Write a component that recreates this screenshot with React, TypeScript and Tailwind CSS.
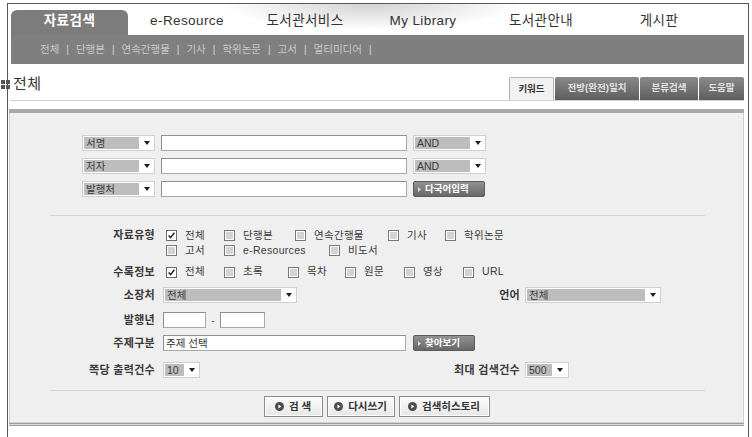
import React from "react";

const navTabs = ["자료검색", "e-Resource", "도서관서비스", "My Library", "도서관안내", "게시판"];
const subMenu = ["전체", "단행본", "연속간행물", "기사", "학위논문", "고서", "멀티미디어"];

function Arrow() {
  return (
    <svg width="6" height="4" viewBox="0 0 6 4" className="shrink-0">
      <path d="M0 0h6L3 4z" fill="#1f1f1f" />
    </svg>
  );
}

function Select({ value, w, hl }: { value: string; w: string; hl: string }) {
  return (
    <div className={`${w} h-[16px] shrink-0 bg-white border border-[#cfcfcf] flex items-center pl-px`}>
      <span className={`${hl} h-[12px] bg-[#bdbdbd] text-[10.5px] leading-[12px] text-[#3a3a3a] pl-[2px] whitespace-nowrap overflow-hidden`}>
        {value}
      </span>
      <span className="flex-1 flex justify-center">
        <Arrow />
      </span>
    </div>
  );
}

function TextBox({ w, value }: { w: string; value?: string }) {
  return (
    <div className={`${w} h-[16px] shrink-0 bg-white border border-[#a9a9a9] border-t-[#8f8f8f] border-l-[#8f8f8f] text-[10.5px] leading-[14px] text-[#333] pl-[2px]`}>
      {value}
    </div>
  );
}

function DarkButton({ w, label }: { w: string; label: string }) {
  return (
    <div className={`${w} h-[16px] shrink-0 rounded-[2px] border border-[#5c5c5c] bg-gradient-to-b from-[#929292] to-[#686868] flex items-center pl-[4px] text-white text-[9.5px] font-bold leading-none`}>
      <svg width="3" height="5" viewBox="0 0 3 5" className="mr-[4px]">
        <path d="M0 0l3 2.5L0 5z" fill="#dcdcdc" />
      </svg>
      {label}
    </div>
  );
}

function Box({ checked }: { checked?: boolean }) {
  if (checked) {
    return (
      <span className="w-[11px] h-[11px] shrink-0 border border-[#6c6c6c] bg-white flex items-center justify-center">
        <svg width="7" height="7" viewBox="0 0 7 7">
          <path d="M0.6 3.4 L2.6 5.6 L6.4 0.8" stroke="#222" strokeWidth="1.5" fill="none" />
        </svg>
      </span>
    );
  }
  return (
    <span className="w-[11px] h-[11px] shrink-0 border border-[#787878] bg-white p-px">
      <span className="block w-full h-full bg-[#d3d3d3]" />
    </span>
  );
}

type Item = { label: string; w?: string; checked?: boolean };

function Check({ label, w, checked }: Item) {
  return (
    <span className={`${w ?? ""} shrink-0 flex items-center`}>
      <Box checked={checked} />
      <span className="ml-[8px] text-[10.5px] tracking-[0.3px] text-[#3a3a3a] whitespace-nowrap">{label}</span>
    </span>
  );
}

function Label({ children, w = "w-[145px]" }: { children: React.ReactNode; w?: string }) {
  return (
    <div className={`${w} shrink-0 text-right font-bold text-[11px] tracking-[0.3px] text-[#3a3a3a] whitespace-nowrap`}>
      {children}
    </div>
  );
}

function Play() {
  return (
    <svg width="9" height="9" viewBox="0 0 9 9" className="shrink-0">
      <circle cx="4.5" cy="4.5" r="4.5" fill="#4d4d4d" />
      <path d="M3.4 2.5 L6.4 4.5 L3.4 6.5z" fill="#fff" />
    </svg>
  );
}

function LightButton({ w, label }: { w: string; label: string }) {
  return (
    <div className={`${w} h-[21px] shrink-0 border border-[#8c8c8c] bg-white p-px`}>
      <div className="h-full bg-gradient-to-b from-[#fbfbfb] to-[#e8e8e8] flex items-center justify-center gap-[5px] text-[10.5px] font-bold text-[#333] whitespace-nowrap">
        <Play />
        {label}
      </div>
    </div>
  );
}

const typeRow1: Item[] = [
  { label: "전체", w: "w-[58px]", checked: true },
  { label: "단행본", w: "w-[71px]" },
  { label: "연속간행물", w: "w-[93px]" },
  { label: "기사", w: "w-[57px]" },
  { label: "학위논문" },
];
const typeRow2: Item[] = [
  { label: "고서", w: "w-[58px]" },
  { label: "e-Resources", w: "w-[105px]" },
  { label: "비도서" },
];
const infoRow: Item[] = [
  { label: "전체", w: "w-[58px]", checked: true },
  { label: "초록", w: "w-[64px]" },
  { label: "목차", w: "w-[57px]" },
  { label: "원문", w: "w-[59px]" },
  { label: "영상", w: "w-[59px]" },
  { label: "URL" },
];

export default function App() {
  return (
    <div className='w-[752px] h-[437px] overflow-hidden bg-white text-[#333] font-[family-name:"Liberation_Sans","Noto_Sans_CJK_KR",sans-serif]'>
      <div className="ml-[7px] mt-[3px] w-[742px] h-[434px] border-x border-t border-[#555] flex flex-col">
        {/* top navigation */}
        <div className="h-[31px] flex items-end pl-[3px] bg-[radial-gradient(ellipse_150px_26px_at_49%_0%,#d2d2d2,#ffffff)]">
          {navTabs.map((t, i) =>
            i === 0 ? (
              <div
                key={t}
                className="w-[117px] h-[25px] rounded-t-[6px] bg-[#7c7c7c] flex items-center justify-center pb-[3px] text-white font-bold text-[13.5px] tracking-[0.5px]"
              >
                {t}
              </div>
            ) : (
              <div
                key={t}
                className="w-[118px] h-[25px] flex items-center justify-center pb-[3px] text-[#333] text-[13.5px] tracking-[0.4px]"
              >
                {t}
              </div>
            )
          )}
        </div>

        {/* sub menu */}
        <div className="ml-[3px] w-[733px] h-[29px] bg-[#7f7f7f] flex items-center pl-[29px] text-[10.5px] text-[#cacaca]">
          {subMenu.map((s) => (
            <span key={s} className="flex items-center">
              {s}
              <span className="mx-[7px] text-[#d6d6d6] text-[10px]">|</span>
            </span>
          ))}
        </div>

        {/* page title and search mode tabs */}
        <div className="h-[36px] flex justify-between">
          <div className="flex items-center pt-[5px] -ml-[7px]">
            <div className="grid grid-cols-2 gap-px w-[9px]">
              <span className="w-[4px] h-[4px] bg-[#555]" />
              <span className="w-[4px] h-[4px] bg-[#555]" />
              <span className="w-[4px] h-[4px] bg-[#555]" />
              <span className="w-[4px] h-[4px] bg-[#555]" />
            </div>
            <span className="ml-[3px] text-[15px] text-[#333] tracking-[0.5px]">전체</span>
          </div>
          <div className="self-end flex gap-px mr-[4px] h-[23px]">
            <div className="w-[45px] h-full rounded-t-[2px] border border-b-0 border-[#b5b5b5] bg-[#f1f1f1] flex items-center justify-center text-[9.5px] font-bold text-[#333]">
              키워드
            </div>
            <div className="w-[84px] h-full rounded-t-[2px] bg-gradient-to-b from-[#8a8a8a] to-[#5e5e5e] flex items-center justify-center text-[9.5px] font-bold text-[#e2e2e2]">
              전방(완전)일치
            </div>
            <div className="w-[58px] h-full rounded-t-[2px] bg-gradient-to-b from-[#8a8a8a] to-[#5e5e5e] flex items-center justify-center text-[9.5px] font-bold text-[#e2e2e2]">
              분류검색
            </div>
            <div className="w-[45px] h-full rounded-t-[2px] bg-gradient-to-b from-[#8a8a8a] to-[#5e5e5e] flex items-center justify-center text-[9.5px] font-bold text-[#e2e2e2]">
              도움말
            </div>
          </div>
        </div>
        <div className="ml-[2px] mr-[4px] h-px bg-[#d2d2d2]" />

        {/* search form */}
        <div className="mt-[8px] ml-[1px] w-[735px] h-[4px] bg-[#a9a9a9]" />
        <div className="ml-[1px] w-[735px] h-[310px] border border-t-0 border-[#d0d0d0] bg-[#efefef] flex flex-col pt-[22px]">
          <div className="pl-[72px] flex flex-col gap-[7px]">
            <div className="flex items-center gap-[6px]">
              <Select value="서명" w="w-[73px]" hl="w-[55px]" />
              <TextBox w="w-[246px]" />
              <Select value="AND" w="w-[73px]" hl="w-[55px]" />
            </div>
            <div className="flex items-center gap-[6px]">
              <Select value="저자" w="w-[73px]" hl="w-[55px]" />
              <TextBox w="w-[246px]" />
              <Select value="AND" w="w-[73px]" hl="w-[55px]" />
            </div>
            <div className="flex items-center gap-[6px]">
              <Select value="발행처" w="w-[73px]" hl="w-[55px]" />
              <TextBox w="w-[246px]" />
              <DarkButton w="w-[72px]" label="다국어입력" />
            </div>
          </div>

          <div className="mt-[18px] ml-[40px] w-[655px] h-px bg-[#d4d4d4]" />

          {/* material type */}
          <div className="mt-[12px] flex">
            <div className="h-[15px] flex items-center">
              <Label>자료유형</Label>
            </div>
            <div className="ml-[11px] flex flex-col">
              <div className="h-[15px] flex items-center">
                {typeRow1.map((c) => (
                  <Check key={c.label} {...c} />
                ))}
              </div>
              <div className="h-[15px] flex items-center">
                {typeRow2.map((c) => (
                  <Check key={c.label} {...c} />
                ))}
              </div>
            </div>
          </div>

          {/* holdings info */}
          <div className="mt-[6px] h-[16px] flex items-center">
            <Label>수록정보</Label>
            <div className="ml-[11px] flex items-center">
              {infoRow.map((c) => (
                <Check key={c.label} {...c} />
              ))}
            </div>
          </div>

          {/* location / language */}
          <div className="mt-[7px] h-[16px] flex items-center">
            <div className="w-[390px] shrink-0 flex items-center">
              <Label>소장처</Label>
              <div className="ml-[8px]">
                <Select value="전체" w="w-[134px]" hl="w-[116px]" />
              </div>
            </div>
            <Label w="w-[120px]">언어</Label>
            <div className="ml-[5px]">
              <Select value="전체" w="w-[136px]" hl="w-[118px]" />
            </div>
          </div>

          {/* publication year */}
          <div className="mt-[9px] h-[16px] flex items-center">
            <Label>발행년</Label>
            <div className="ml-[8px] flex items-center">
              <TextBox w="w-[43px]" />
              <span className="w-[14px] text-center text-[10px] text-[#444]">-</span>
              <TextBox w="w-[45px]" />
            </div>
          </div>

          {/* subject */}
          <div className="mt-[7px] h-[16px] flex items-center">
            <Label>주제구분</Label>
            <div className="ml-[8px] flex items-center gap-[7px]">
              <TextBox w="w-[243px]" value="주제 선택" />
              <DarkButton w="w-[62px]" label="찾아보기" />
            </div>
          </div>

          {/* result counts */}
          <div className="mt-[11px] h-[16px] flex items-center">
            <div className="w-[390px] shrink-0 flex items-center">
              <Label>쪽당 출력건수</Label>
              <div className="ml-[8px]">
                <Select value="10" w="w-[37px]" hl="w-[19px]" />
              </div>
            </div>
            <Label w="w-[120px]">최대 검색건수</Label>
            <div className="ml-[5px]">
              <Select value="500" w="w-[44px]" hl="w-[25px]" />
            </div>
          </div>

          <div className="mt-[12px] ml-[40px] w-[655px] h-px bg-[#d4d4d4]" />

          <div className="mt-[5px] flex justify-center gap-[4px]">
            <LightButton w="w-[59px]" label="검 색" />
            <LightButton w="w-[68px]" label="다시쓰기" />
            <LightButton w="w-[91px]" label="검색히스토리" />
          </div>
        </div>
        <div className="ml-[1px] w-[735px] h-[3px] border-y border-[#9c9c9c] bg-[#dcdcdc]" />
      </div>
    </div>
  );
}
